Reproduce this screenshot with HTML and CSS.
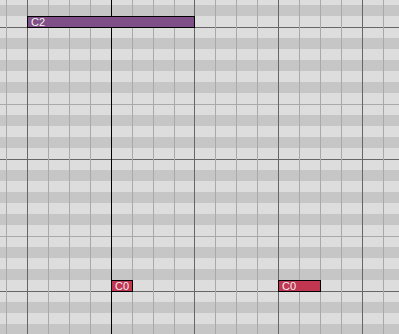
FILE: index.html
```html
<!DOCTYPE html>
<html>
<head>
<meta charset="utf-8">
<link rel="stylesheet" href="styles.css">
</head>
<body>
<div class="roll">
  <div class="rows">
    <div class="row w"></div>
    <div class="row b"></div>
    <div class="row w"></div>
    <div class="row w oct"></div>
    <div class="row b"></div>
    <div class="row w"></div>
    <div class="row b"></div>
    <div class="row w"></div>
    <div class="row b"></div>
    <div class="row w"></div>
    <div class="row w ef"></div>
    <div class="row b"></div>
    <div class="row w"></div>
    <div class="row b"></div>
    <div class="row w"></div>
    <div class="row w oct"></div>
    <div class="row b"></div>
    <div class="row w"></div>
    <div class="row b"></div>
    <div class="row w"></div>
    <div class="row b"></div>
    <div class="row w"></div>
    <div class="row w ef"></div>
    <div class="row b"></div>
    <div class="row w"></div>
    <div class="row b"></div>
    <div class="row w"></div>
    <div class="row w oct"></div>
    <div class="row b"></div>
    <div class="row w"></div>
    <div class="row b"></div>
    <div class="row w"></div>
  </div>
  <div class="cols">
    <div class="col"></div>
    <div class="col beat"></div>
    <div class="col"></div>
    <div class="col"></div>
    <div class="col"></div>
    <div class="col bar"></div>
    <div class="col"></div>
    <div class="col"></div>
    <div class="col"></div>
    <div class="col beat"></div>
    <div class="col"></div>
    <div class="col"></div>
    <div class="col"></div>
    <div class="col beat"></div>
    <div class="col"></div>
    <div class="col"></div>
    <div class="col"></div>
    <div class="col beat"></div>
    <div class="col"></div>
  </div>
  <div class="note purple n-c2">C2</div>
  <div class="note red n-c0a">C0</div>
  <div class="note red n-c0b">C0</div>
</div>
</body>
</html>
```

FILE: styles.css
```css
html, body {
  margin: 0;
  padding: 0;
  background: #dddddd;
  overflow: hidden;
}

.roll {
  position: relative;
  width: 399px;
  height: 334px;
  overflow: hidden;
}

.rows {
  display: flex;
  flex-direction: column;
  margin-top: -6px;
}

.row {
  height: 11px;
  box-sizing: border-box;
  flex: none;
}

.row.w { background: #dddddd; }
.row.b { background: #c6c6c6; }
.row.oct { border-top: 1px solid #676767; }
.row.ef { border-top: 1px solid #aaaaaa; }

.cols {
  position: absolute;
  top: 0;
  left: 6px;
  bottom: 0;
  display: flex;
}

.col {
  flex: none;
  width: 20.94px;
  box-sizing: border-box;
  border-left: 1px solid #a9a9a9;
}

.col.beat { border-left-color: #666666; }
.col.bar { border-left-color: #000000; }

.note {
  position: absolute;
  box-sizing: border-box;
  height: 12px;
  border: 1px solid #000;
  padding-left: 3px;
  font-family: "Liberation Sans", Arial, sans-serif;
  font-size: 11px;
  line-height: 10px;
  color: #f4eef2;
  white-space: nowrap;
  overflow: hidden;
}

.purple { background: #7f5087; }
.red { background: #c13650; }

.n-c2 { left: 27px; top: 16px; width: 168px; }
.n-c0a { left: 111px; top: 280px; width: 22px; }
.n-c0b { left: 278px; top: 280px; width: 43px; }
```
